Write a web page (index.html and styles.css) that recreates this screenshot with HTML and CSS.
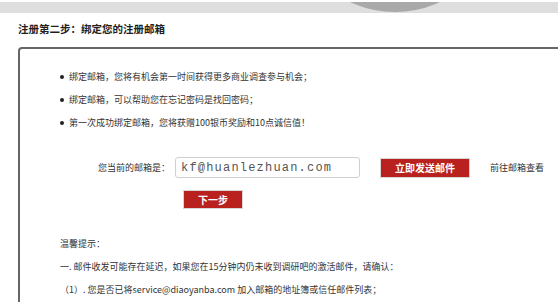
FILE: index.html
```html
<!DOCTYPE html>
<html lang="zh-CN">
<head>
<meta charset="utf-8">
<title>注册第二步</title>
<link rel="stylesheet" href="styles.css">
</head>
<body>
<div class="topbar"><span class="knob"></span></div>
<h2 class="title">注册第二步：绑定您的注册邮箱</h2>
<div class="panel">
  <ul class="perks">
    <li>绑定邮箱，您将有机会第一时间获得更多商业调查参与机会；</li>
    <li>绑定邮箱，可以帮助您在忘记密码是找回密码；</li>
    <li>第一次成功绑定邮箱，您将获赠100银币奖励和10点诚信值！</li>
  </ul>
  <div class="email-row">
    <span class="label">您当前的邮箱是：</span>
    <input class="email" type="text" value="kf@huanlezhuan.com" readonly>
    <button class="btn btn-send" type="button">立即发送邮件</button>
    <a class="goto">前往邮箱查看</a>
  </div>
  <div class="next-row">
    <button class="btn btn-next" type="button">下一步</button>
  </div>
  <div class="tips">
    <p>温馨提示：</p>
    <p>一. 邮件收发可能存在延迟，如果您在15分钟内仍未收到调研吧的激活邮件，请确认：</p>
    <p>（1）. 您是否已将service@diaoyanba.com 加入邮箱的地址簿或信任邮件列表；</p>
  </div>
</div>
</body>
</html>
```

FILE: styles.css
```css
html, body {
  margin: 0;
  padding: 0;
  background: #fff;
  overflow: hidden;
}

body {
  font-family: "Noto Sans CJK SC", "Noto Sans", sans-serif;
  color: #333;
}

.topbar {
  margin-top: 2px;
  height: 11px;
  background: #dedede;
  position: relative;
  overflow: hidden;
}

.knob {
  position: absolute;
  left: 289px;
  top: -202px;
  width: 212px;
  height: 212px;
  border-radius: 50%;
  background: #a9a9a9;
}

.title {
  margin: 8px 0 10px;
  padding-left: 18px;
  font-size: 10.5px;
  line-height: 16px;
  font-weight: bold;
  color: #1e1e1e;
}

.panel {
  margin-left: 18px;
  margin-right: -20px;
  height: 237px;
  overflow: hidden;
  border: 2px solid #666;
  border-bottom: none;
  border-radius: 4px 0 0 0;
  padding: 16px 0 0 40px;
}

.perks {
  list-style: none;
  margin: 0;
  padding: 0;
  font-size: 9px;
  line-height: 23px;
  color: #333;
}

.perks li {
  display: flex;
  align-items: center;
  gap: 5px;
}

.perks li::before {
  content: "";
  width: 4px;
  height: 4px;
  border-radius: 50%;
  background: #222;
  flex: none;
}

.email-row {
  margin-top: 23px;
  height: 21px;
  display: flex;
  align-items: center;
  font-size: 9px;
}

.label {
  width: 110px;
  margin-right: 5px;
  text-align: right;
  color: #333;
}

.email {
  box-sizing: border-box;
  width: 185px;
  height: 21px;
  margin: 0;
  padding: 0 5px;
  border: 1px solid #cfcfcf;
  border-radius: 3px;
  background: #fff;
  font-family: "Liberation Mono", monospace;
  font-size: 12px;
  letter-spacing: 1.2px;
  color: #555;
  outline: none;
}

.btn {
  box-sizing: border-box;
  margin: 0;
  padding: 0;
  border: 1px solid #d6d6d6;
  background: #b8211e;
  color: #fff;
  font-family: "Noto Sans CJK SC", sans-serif;
  font-size: 10px;
  font-weight: bold;
  cursor: pointer;
}

.btn-send {
  margin-left: 20px;
  width: 90px;
  height: 20px;
}

.goto {
  margin-left: 20px;
  color: #333;
}

.next-row {
  margin-top: 12px;
  padding-left: 123px;
  display: flex;
}

.btn-next {
  width: 60px;
  height: 19px;
}

.tips {
  margin-top: 23px;
  font-size: 9px;
  line-height: 23px;
  color: #333;
}

.tips p {
  margin: 0;
}
```
